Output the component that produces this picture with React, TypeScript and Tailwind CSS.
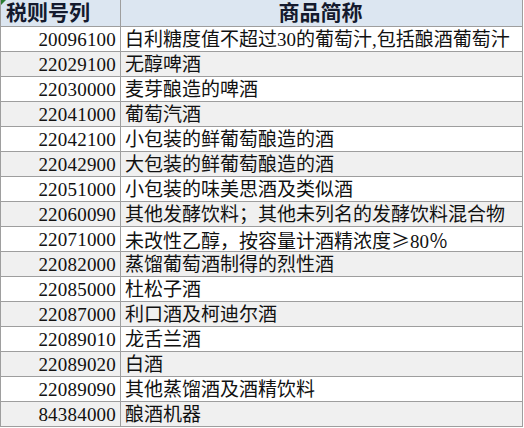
const rows: [string, string][] = [
  ["20096100", "白利糖度值不超过30的葡萄汁,包括酿酒葡萄汁"],
  ["22029100", "无醇啤酒"],
  ["22030000", "麦芽酿造的啤酒"],
  ["22041000", "葡萄汽酒"],
  ["22042100", "小包装的鲜葡萄酿造的酒"],
  ["22042900", "大包装的鲜葡萄酿造的酒"],
  ["22051000", "小包装的味美思酒及类似酒"],
  ["22060090", "其他发酵饮料；其他未列名的发酵饮料混合物"],
  ["22071000", "未改性乙醇，按容量计酒精浓度"],
  ["22082000", "蒸馏葡萄酒制得的烈性酒"],
  ["22085000", "杜松子酒"],
  ["22087000", "利口酒及柯迪尔酒"],
  ["22089010", "龙舌兰酒"],
  ["22089020", "白酒"],
  ["22089090", "其他蒸馏酒及酒精饮料"],
  ["84384000", "酿酒机器"],
];

const font = { fontFamily: '"Liberation Serif", "Noto Sans CJK SC", serif' };
const cjk = { fontFamily: '"Noto Sans CJK SC", sans-serif' };

export default function App() {
  return (
    <div className="w-[524px] h-[428px] bg-white overflow-hidden text-[#111]" style={font}>
      <div className="w-[523px] border-l border-r border-[#9e9e9e]">
        {/* Header */}
        <div className="relative grid grid-cols-[120px_1fr] h-[27px] bg-[#dce6f1] border-b border-[#9e9e9e] font-bold text-[21px] leading-[26px] text-[#141a2e]">
          <span className="absolute left-0 top-0 w-0 h-0 border-t-[5px] border-r-[5px] border-t-[#2e7d32] border-r-transparent" />
          <div className="pl-[5px] border-r border-[#9e9e9e]">税则号列</div>
          <div className="text-center pr-[2px]">商品简称</div>
        </div>
        {rows.map(([code, name], i) => (
          <div
            key={code}
            className={`grid grid-cols-[120px_1fr] h-[25px] border-b border-[#9e9e9e] text-[19px] leading-[25px] ${i % 2 === 1 ? "bg-[#f0f0f0]" : "bg-white"}`}
          >
            <div className="text-right pr-[4px] border-r border-[#9e9e9e] tracking-[0.2px]">{code}</div>
            <div className="pl-[4px] whitespace-nowrap">
              {name}
              {code === "22071000" && (
                <>
                  <span style={cjk}>≥</span>80<span style={cjk}>％</span>
                </>
              )}
            </div>
          </div>
        ))}
      </div>
    </div>
  );
}
